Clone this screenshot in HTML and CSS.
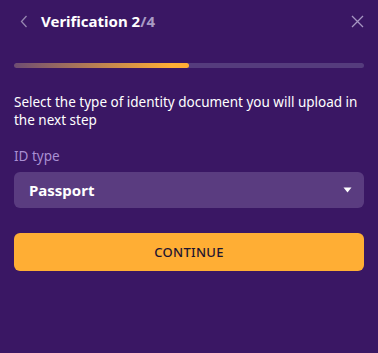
FILE: index.html
```html
<!DOCTYPE html>
<html>
<head>
<meta charset="utf-8">
<link rel="stylesheet" href="styles.css">
</head>
<body>
<div class="panel">
  <header class="head">
    <button class="icon-btn back" aria-label="Back">
      <svg width="8" height="13" viewBox="0 0 8 13"><path d="M6.5 1 1.5 6.5 6.5 12" fill="none" stroke="#9686b0" stroke-width="1.3"/></svg>
    </button>
    <h1 class="title">Verification 2<span class="total">/4</span></h1>
    <button class="icon-btn close" aria-label="Close">
      <svg width="13" height="13" viewBox="0 0 13 13"><path d="M1 1 12 12M12 1 1 12" fill="none" stroke="#a696c2" stroke-width="1.3"/></svg>
    </button>
  </header>
  <div class="progress"><div class="fill" style="width:50%"></div></div>
  <p class="desc">Select the type of identity document you will upload in the next step</p>
  <label class="label">ID type</label>
  <div class="select">
    <span class="value">Passport</span>
    <svg class="caret" width="9" height="6" viewBox="0 0 9 6"><path d="M0.5 0.5h8L4.5 5.5z" fill="#fff"/></svg>
  </div>
  <button class="cta">CONTINUE</button>
</div>
</body>
</html>
```
FILE: styles.css
```css
html, body {
  margin: 0;
  padding: 0;
  background: #3a1764;
}
body {
  width: 378px;
  height: 353px;
  font-family: "Noto Sans", "Open Sans", sans-serif;
  color: #fff;
}
.panel {
  padding: 0 14px;
  display: flex;
  flex-direction: column;
}
.head {
  display: flex;
  align-items: center;
  height: 42px;
}
.icon-btn {
  background: none;
  border: 0;
  padding: 0;
  display: flex;
  align-items: center;
  justify-content: center;
  cursor: pointer;
}
.back {
  width: 16px;
  margin-left: 2px;
}
.title {
  margin: 0 0 0 9px;
  font-size: 15px;
  font-weight: 700;
  color: #fff;
  flex: 1;
}
.total {
  color: #a99bc4;
}
.close {
  width: 13px;
}
.progress {
  margin-top: 21px;
  height: 5px;
  border-radius: 3px;
  background: #553c7d;
  overflow: hidden;
}
.fill {
  height: 100%;
  border-radius: 3px;
  background: linear-gradient(90deg, rgba(255,174,52,0.15), #ffae34 90%);
}
.desc {
  margin: 25px 0 0;
  font-size: 13.5px;
  line-height: 18px;
  color: #fff;
}
.label {
  margin-top: 18px;
  font-size: 13.5px;
  line-height: 18px;
  color: #a98fd2;
}
.select {
  margin-top: 7px;
  height: 36px;
  border-radius: 6px;
  background: #5a3c80;
  display: flex;
  align-items: center;
  padding: 0 12px 0 15px;
}
.value {
  flex: 1;
  font-size: 15px;
  font-weight: 700;
}
.caret {
  display: block;
}
.cta {
  margin-top: 25px;
  height: 38px;
  border: 0;
  border-radius: 6px;
  background: #ffae34;
  color: #1e1530;
  font-family: "Noto Sans", "Open Sans", sans-serif;
  font-size: 13px;
  font-weight: 500;
  letter-spacing: 0.3px;
}
```
